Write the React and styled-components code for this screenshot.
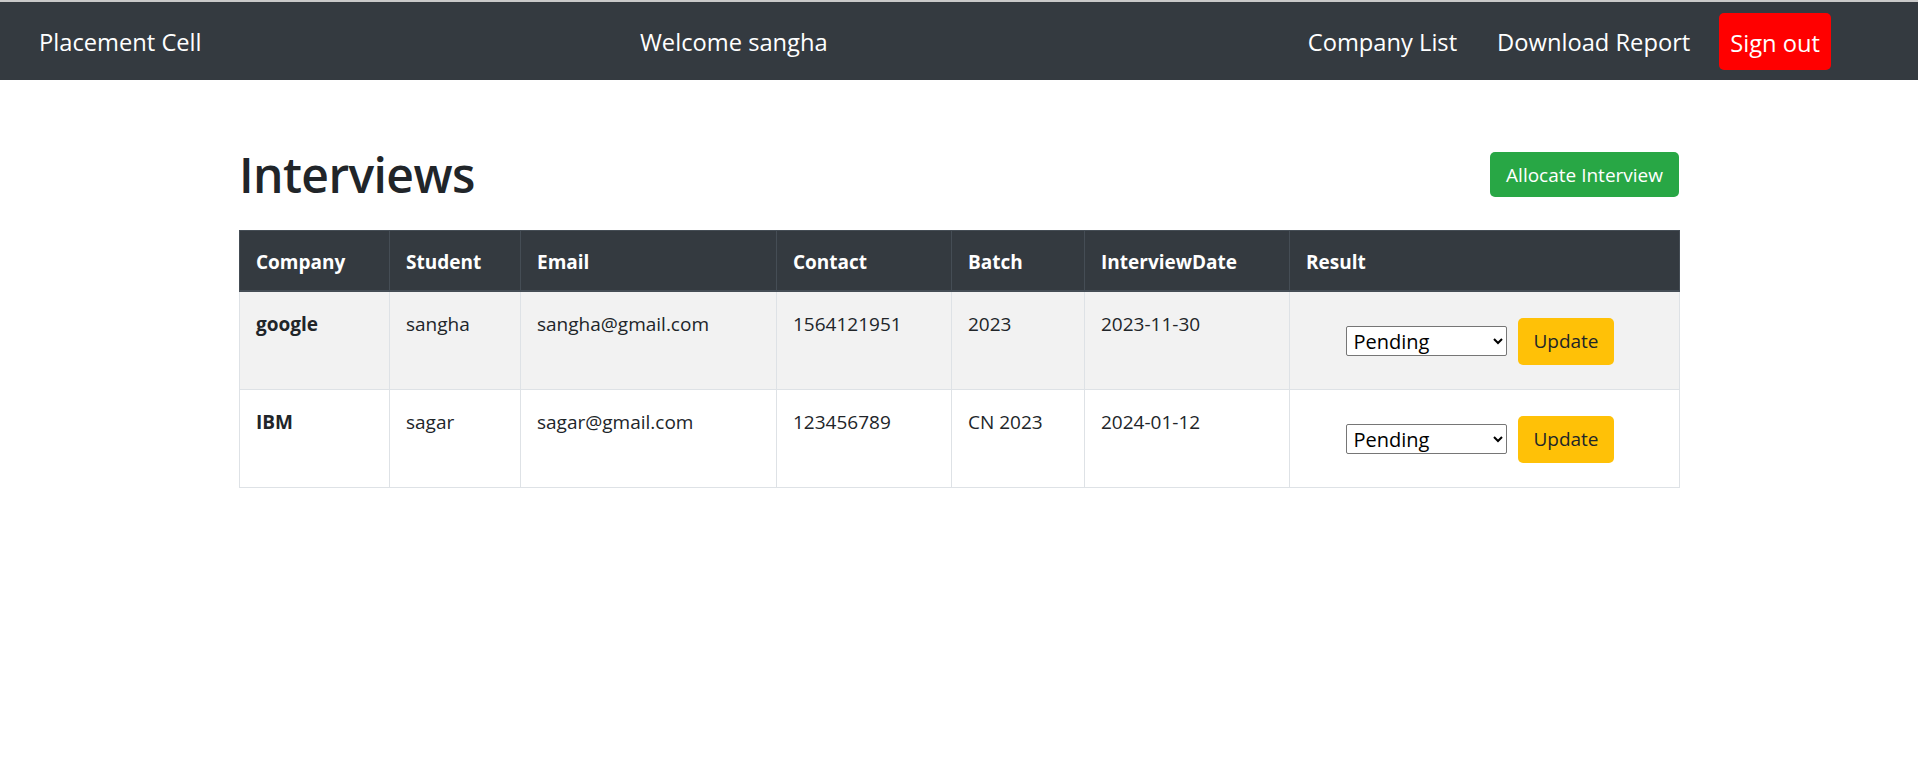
import React from "react";
import styled, { createGlobalStyle } from "styled-components";

const GlobalStyle = createGlobalStyle`
  * { box-sizing: border-box; }
  body {
    margin: 0;
    background: #fff;
    color: #212529;
    font-family: "Open Sans", "Noto Sans", sans-serif;
    font-size: 20px;
    line-height: 1.5;
  }
`;

const Nav = styled.nav`
  border-top: 2px solid #c9c9c9;
  height: 80px;
  background: #343a40;
  display: grid;
  grid-template-columns: 601px auto 1fr auto;
  align-items: center;
  padding: 0 87px 0 39px;
  color: #fff;
  font-size: 23.7px;
`;

const Brand = styled.div`
  padding-top: 4px;
`;

const Welcome = styled.div`
  padding-top: 4px;
`;

const NavRight = styled.div`
  grid-column: 4;
  display: flex;
  align-items: center;
`;

const NavLink = styled.a`
  color: #fff;
  text-decoration: none;
  padding: 4px 20px 0;
`;

const SignOut = styled.button`
  margin-left: 9px;
  background: #ff0000;
  color: #fff;
  border: none;
  border-radius: 5px;
  height: 57px;
  padding: 3px 11px 0;
  font-family: inherit;
  font-size: 23.7px;
`;

const Main = styled.main`
  width: 1440px;
  margin: 0 auto;
  padding-top: 64px;
`;

const HeaderRow = styled.div`
  display: flex;
  align-items: center;
  justify-content: space-between;
  height: 61px;
  margin-bottom: 25px;
`;

const Title = styled.h1`
  margin: 0;
  font-size: 48px;
  font-weight: 600;
  line-height: 1.2;
  letter-spacing: -0.6px;
`;

const Button = styled.button`
  border: none;
  border-radius: 5px;
  font-family: inherit;
  font-size: 19px;
  background: ${(p) => p.$bg};
  color: ${(p) => p.$fg};
  height: ${(p) => p.$h}px;
  padding: 0 ${(p) => p.$px}px;
`;

const Table = styled.table`
  width: 1440px;
  border-collapse: collapse;
  table-layout: fixed;
  border: 1px solid #dee2e6;
`;

const Th = styled.th`
  background: #343a40;
  color: #fff;
  text-align: left;
  font-weight: 700;
  padding: 17px 16px 13px;
  border: 1px solid #454d55;
  border-bottom: 2px solid #454d55;
  width: ${(p) => p.$w}px;
  font-size: 19px;
`;

const Tr = styled.tr`
  background: ${(p) => (p.$striped ? "#f2f2f2" : "#fff")};
`;

const Td = styled.td`
  padding: 18px 16px 12px;
  border: 1px solid #dee2e6;
  vertical-align: top;
  font-weight: ${(p) => (p.$bold ? 700 : 400)};
  font-size: 19px;
`;

const ResultCell = styled(Td)`
  padding: 16px 16px 14px;
`;

const ResultForm = styled.form`
  height: 67px;
  display: flex;
  align-items: center;
  justify-content: center;
  gap: 11px;
  padding-right: 9px;
`;

const Select = styled.select`
  width: 161px;
  height: 30px;
  border: 1px solid #767676;
  border-radius: 2px;
  background: #fff;
  color: #000;
  font-family: inherit;
  font-size: 20px;
  padding: 0 2px;
`;

const columns = [
  ["Company", 150],
  ["Student", 131],
  ["Email", 256],
  ["Contact", 175],
  ["Batch", 133],
  ["InterviewDate", 205],
  ["Result", 390],
];

const rows = [
  ["google", "sangha", "sangha@gmail.com", "1564121951", "2023", "2023-11-30"],
  ["IBM", "sagar", "sagar@gmail.com", "123456789", "CN 2023", "2024-01-12"],
];

const App = () => {
  return (
    <>
      <GlobalStyle />
      <Nav>
        <Brand>Placement Cell</Brand>
        <Welcome>Welcome sangha</Welcome>
        <NavRight>
          <NavLink href="#">Company List</NavLink>
          <NavLink href="#">Download Report</NavLink>
          <SignOut>Sign out</SignOut>
        </NavRight>
      </Nav>
      <Main>
        <HeaderRow>
          <Title>Interviews</Title>
          <Button $bg="#28a745" $fg="#fff" $h={45} $px={16}>
            Allocate Interview
          </Button>
        </HeaderRow>
        <Table>
          <thead>
            <tr>
              {columns.map(([name, w]) => (
                <Th key={name} $w={w}>
                  {name}
                </Th>
              ))}
            </tr>
          </thead>
          <tbody>
            {rows.map((r, i) => (
              <Tr key={r[0]} $striped={i % 2 === 0}>
                {r.map((v, j) => (
                  <Td key={j} $bold={j === 0}>
                    {v}
                  </Td>
                ))}
                <ResultCell>
                  <ResultForm onSubmit={(e) => e.preventDefault()}>
                    <Select defaultValue="Pending">
                      <option>Pending</option>
                      <option>Pass</option>
                      <option>Fail</option>
                      <option>On Hold</option>
                      <option>Didn't Attempt</option>
                    </Select>
                    <Button $bg="#ffc107" $fg="#212529" $h={47} $px={15}>
                      Update
                    </Button>
                  </ResultForm>
                </ResultCell>
              </Tr>
            ))}
          </tbody>
        </Table>
      </Main>
    </>
  );
};

export default App;
